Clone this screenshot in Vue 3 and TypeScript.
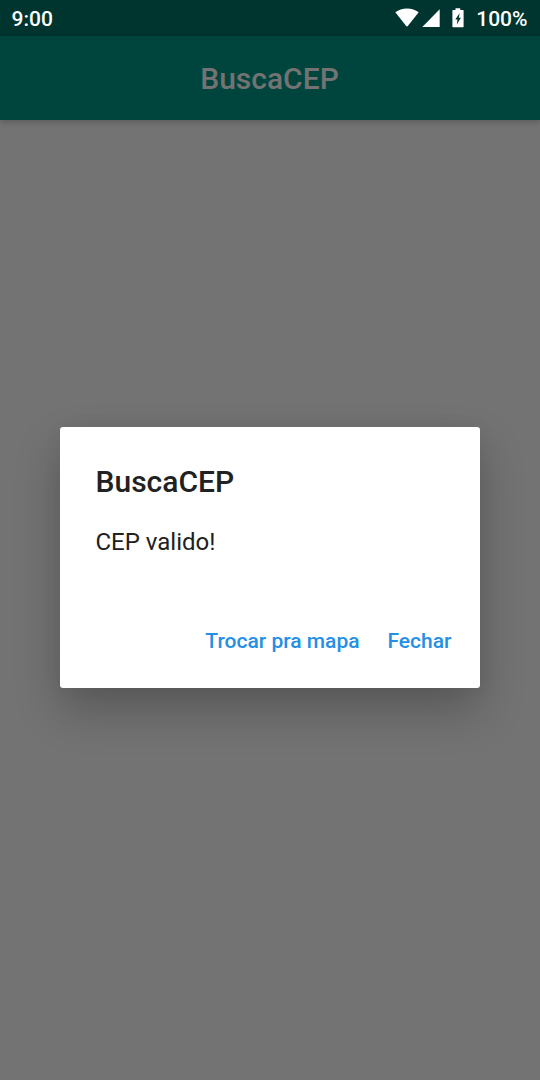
<script setup lang="ts">
const title: string = 'BuscaCEP'
const message: string = 'CEP valido!'
const actions: string[] = ['Trocar pra mapa', 'Fechar']
</script>

<template>
  <div class="screen">
    <header class="status">
      <span class="clock">9:00</span>
      <div class="indicators">
        <svg class="wifi" width="24" height="19" viewBox="0 0 24 19"><path d="M.3 4.300C3.500 1.600 7.500.4 12 .4s8.500 1.200 11.700 3.900L13 17.800Q12 19 11 17.800z" /></svg>
        <svg class="signal" width="18" height="18" viewBox="0 0 18 18"><path d="M17.700.2V18H.3z" /></svg>
        <svg class="battery" width="12" height="20" viewBox="0 0 12 20"><path fill-rule="evenodd" d="M3.500.3h4.700V2H11q.6 0 .6.600v16q0 .6-.6.600H1q-.6 0-.6-.6v-16Q.4 2 1 2h2.500zM7.700 5L3.300 11.500h2.200l-.7 4.900L8.900 9.800H6.800z" /></svg>
        <span class="percent">100%</span>
      </div>
    </header>
    <div class="appbar"><h1>{{ title }}</h1></div>
    <main class="content">
      <section class="dialog" role="dialog">
        <h2>{{ title }}</h2>
        <p>{{ message }}</p>
        <div class="actions">
          <button v-for="action in actions" :key="action" type="button">{{ action }}</button>
        </div>
      </section>
    </main>
  </div>
</template>

<style>
body { margin: 0; }
</style>

<style scoped>
.screen {
  width: 540px;
  height: 1080px;
  overflow: hidden;
  display: flex;
  flex-direction: column;
  background: #737373;
  font-family: Roboto, sans-serif;
}
.status {
  height: 36px;
  flex: none;
  box-sizing: border-box;
  padding: 0 12.500px 0 11.500px;
  display: flex;
  align-items: center;
  justify-content: space-between;
  background: #00342e;
  color: #fff;
  font-size: 21px;
  font-weight: 500;
  line-height: 36px;
}
.clock, .percent { padding-top: 1px; }
.indicators { display: flex; align-items: center; }
.indicators svg { fill: #fff; flex: none; }
.wifi { margin-top: -1px; }
.signal { margin-left: 3px; }
.battery { margin-left: 12px; }
.percent { margin-left: 12px; }
.appbar {
  height: 84px;
  flex: none;
  display: flex;
  align-items: center;
  justify-content: center;
  background: #00453d;
  box-shadow: 0 2px 6px rgba(0, 0, 0, 0.22);
}
h1, h2 { margin: 0; font-size: 30px; font-weight: 500; line-height: 36px; }
h1 { color: #737373; padding: 2px 1px 0 0; }
.content { flex: 1; padding: 307px 60px 0; }
.dialog {
  height: 261px;
  box-sizing: border-box;
  padding: 37px 18.500px 0 35.500px;
  background: #fff;
  border-radius: 3px;
  color: #212121;
  box-shadow: 0 22px 46px rgba(0, 0, 0, 0.24), 0 0 20px rgba(0, 0, 0, 0.04);
}
p { margin: 27px 0 0; font-size: 24px; line-height: 30px; }
.actions { display: flex; justify-content: flex-end; gap: 8px; margin-top: 57px; }
button {
  border: 0;
  background: none;
  padding: 0 10px;
  color: #258fe5;
  font: 500 21px/54px Roboto, sans-serif;
}
</style>
